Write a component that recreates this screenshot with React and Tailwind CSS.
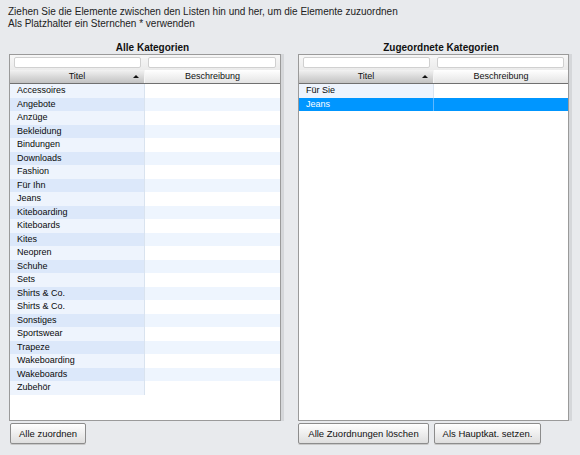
import { memo } from 'react';

const ALL = [
  'Accessoires', 'Angebote', 'Anzüge', 'Bekleidung', 'Bindungen', 'Downloads', 'Fashion',
  'Für Ihn', 'Jeans', 'Kiteboarding', 'Kiteboards', 'Kites', 'Neopren', 'Schuhe', 'Sets',
  'Shirts & Co.', 'Shirts & Co.', 'Sonstiges', 'Sportswear', 'Trapeze', 'Wakeboarding',
  'Wakeboards', 'Zubehör',
];

const ASSIGNED = ['Für Sie', 'Jeans'];

function Row({ label, index, selected }) {
  const odd = index % 2 === 1;
  if (selected) {
    return (
      <div className="flex h-[13.5px] leading-[13.5px] bg-[#0096ff] text-white">
        <div className="w-[135px] pl-[7px] border-r border-[#5fb8ff]">{label}</div>
        <div className="flex-1" />
      </div>
    );
  }
  return (
    <div className="flex h-[13.5px] leading-[13.5px]">
      <div className={`w-[135px] pl-[7px] border-r border-[#d9e3ef] ${odd ? 'bg-[#dce8fa]' : 'bg-[#eef4fd]'}`}>
        {label}
      </div>
      <div className={`flex-1 ${odd ? 'bg-[#eef5fe]' : 'bg-white'}`} />
    </div>
  );
}

function Panel({ title, items, selectedIndex, width }) {
  return (
    <div className={width}>
      <div className="pl-[15px] text-center font-bold text-[10px] leading-[13px] text-[#111]">{title}</div>
      <div className="h-[367px] border border-[#9a9a9a] bg-white shadow-[3px_0_0_#d5d7da] flex flex-col">
        <div className="h-[15px] flex items-center bg-gradient-to-b from-[#f7f7f7] to-[#ebebeb]">
          <div className="w-[135px] pl-[4px] pr-[4px]">
            <div className="h-[11px] bg-white border border-[#d0d0d0] rounded-[2px]" />
          </div>
          <div className="flex-1 pl-[3px] pr-[4px]">
            <div className="h-[11px] bg-white border border-[#d0d0d0] rounded-[2px]" />
          </div>
        </div>
        <div className="h-[14px] flex border-b border-[#707070] text-[9px] leading-[13px] text-[#111]">
          <div className="relative w-[135px] text-center bg-gradient-to-b from-[#f2f2f2] to-[#c2c2c2] border-r border-[#f4f4f4]">
            Titel
            <span className="absolute right-[5px] top-[5px] w-0 h-0 border-l-[3px] border-r-[3px] border-b-[3px] border-l-transparent border-r-transparent border-b-[#111]" />
          </div>
          <div className="flex-1 text-center bg-gradient-to-b from-white to-[#e4e4e4]">Beschreibung</div>
        </div>
        <div className="text-[9px] text-[#0a0a0a]">
          {items.map((label, i) => (
            <Row key={i} label={label} index={i} selected={i === selectedIndex} />
          ))}
        </div>
      </div>
    </div>
  );
}

function Button({ children, width }) {
  return (
    <button
      className={`${width} h-[21px] border border-[#8c8c8c] rounded-[2px] bg-gradient-to-b from-white to-[#dedede] shadow-[0_1px_0_#c8c8c8] text-[9.5px] text-[#111] leading-none`}
    >
      {children}
    </button>
  );
}

export default function App() {
  return (
    <div className="w-[580px] h-[455px] bg-[#e8eaed] font-['Liberation_Sans',Arial,sans-serif] text-[#222] overflow-hidden">
      <div className="pl-[8px] pt-[6px] text-[10px] leading-[12px]">
        Ziehen Sie die Elemente zwischen den Listen hin und her, um die Elemente zuzuordnen
        <br />
        Als Platzhalter ein Sternchen * verwenden
      </div>
      <div className="flex pl-[9px] mt-[11px] gap-[17px]">
        <div>
          <Panel title="Alle Kategorien" items={ALL} width="w-[272px]" />
          <div className="mt-[2px] pl-[1px] flex">
            <Button width="w-[76px]">Alle zuordnen</Button>
          </div>
        </div>
        <div>
          <Panel title="Zugeordnete Kategorien" items={ASSIGNED} selectedIndex={1} width="w-[271px]" />
          <div className="mt-[2px] flex gap-[5px]">
            <Button width="w-[131px]">Alle Zuordnungen löschen</Button>
            <Button width="w-[107px]">Als Hauptkat. setzen.</Button>
          </div>
        </div>
      </div>
    </div>
  );
}
